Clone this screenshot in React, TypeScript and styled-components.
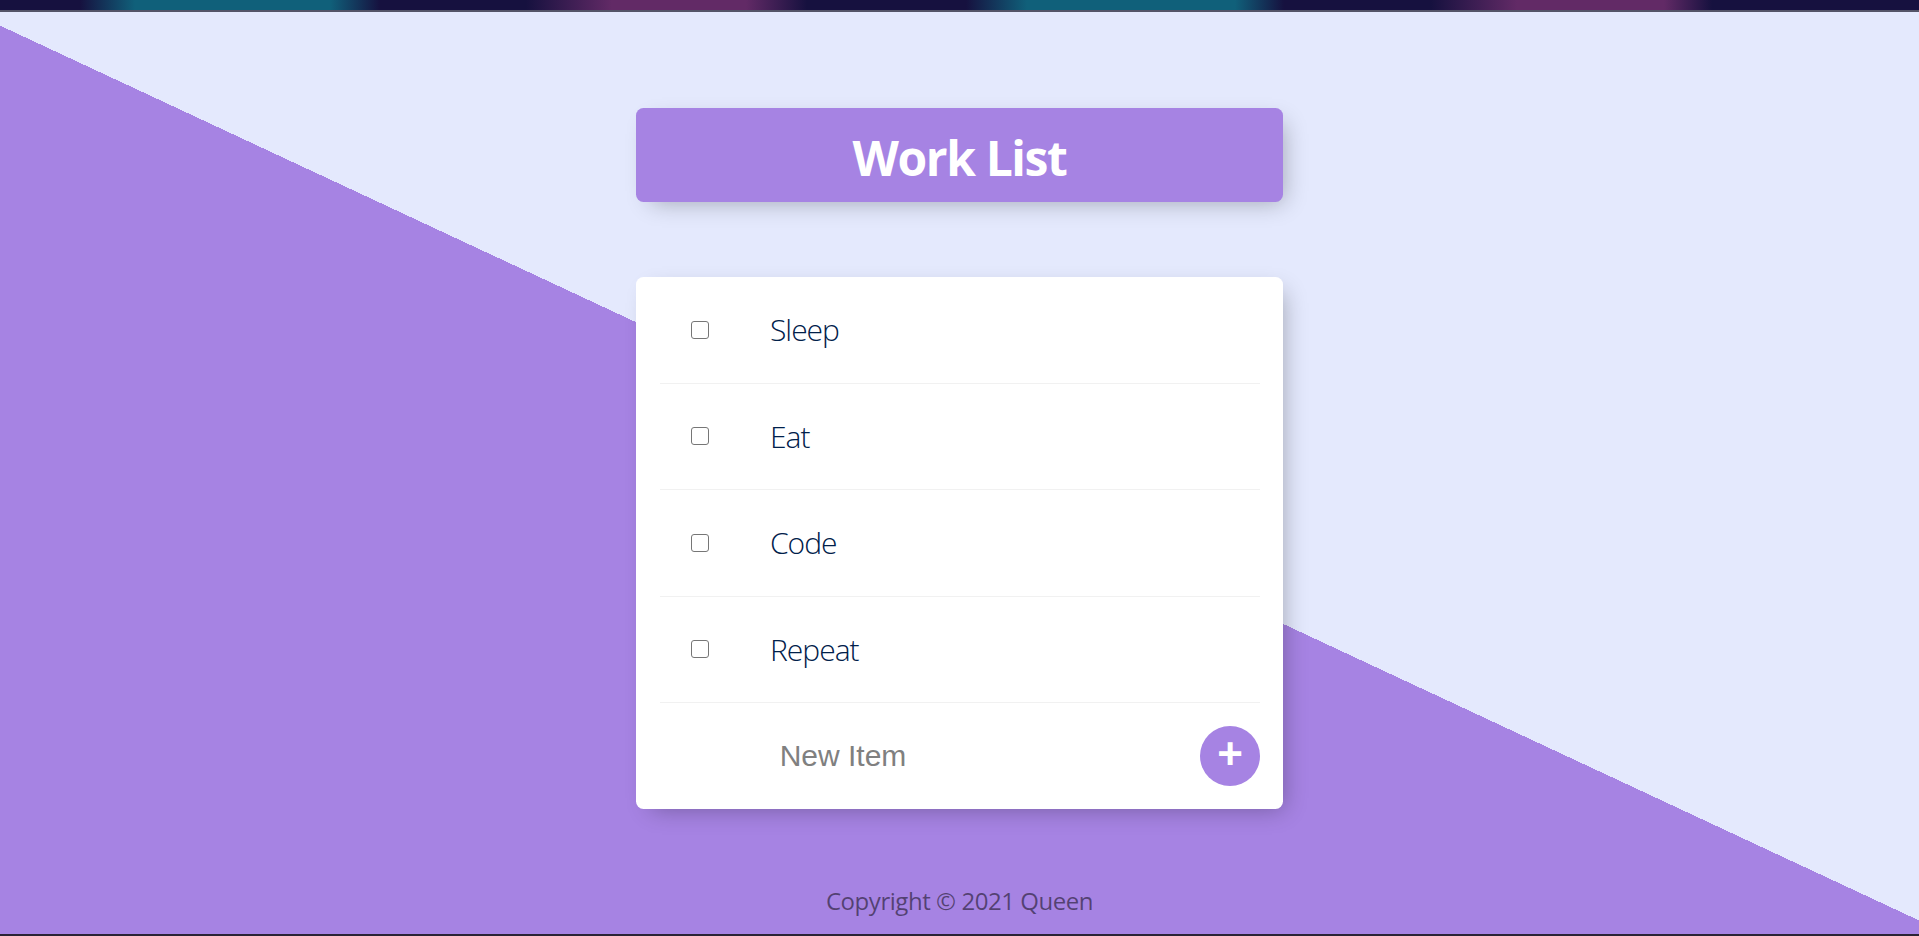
import React from "react";
import styled, { createGlobalStyle } from "styled-components";

const GlobalStyle = createGlobalStyle`
  html, body {
    margin: 0;
    padding: 0;
    height: 100%;
  }
  body {
    font-family: "Open Sans", "Noto Sans", sans-serif;
    overflow: hidden;
  }
  #root {
    height: 100%;
  }
`;

const Window = styled.div`
  display: flex;
  flex-direction: column;
  height: 100vh;
`;

const TopBar = styled.div`
  flex-shrink: 0;
  height: 10px;
  border-bottom: 2px solid #545468;
  background: linear-gradient(
    90deg,
    #16113f 0px,
    #16113f 80px,
    #10607a 135px,
    #10607a 330px,
    #16113f 380px,
    #16113f 526px,
    #622a66 612px,
    #622a66 746px,
    #16113f 807px,
    #16113f 966px,
    #10607a 1027px,
    #10607a 1235px,
    #16113f 1284px,
    #16113f 1431px,
    #622a66 1517px,
    #622a66 1664px,
    #16113f 1712px,
    #16113f 1919px
  );
`;

const Page = styled.main`
  flex: 1;
  display: flex;
  flex-direction: column;
  align-items: center;
  padding-top: 96px;
  background-color: #e4e9fd;
  background-image: linear-gradient(25deg, #a683e3 50%, #e4e9fd 50%);
`;

const BottomEdge = styled.div`
  flex-shrink: 0;
  height: 2px;
  background: #2a2335;
`;

const Box = styled.section`
  width: 647px;
  box-sizing: border-box;
  background: #ffffff;
  border-radius: 7.5px;
  box-shadow: 7.5px 7.5px 22.5px -7.5px rgba(0, 0, 0, 0.3);
  margin-bottom: 75px;
`;

const Heading = styled(Box)`
  height: 94px;
  padding-top: 4px;
  background: #a683e3;
  display: flex;
  align-items: center;
  justify-content: center;
`;

const Title = styled.h1`
  margin: 0;
  color: #ffffff;
  font-family: "Open Sans", "Noto Sans", sans-serif;
  font-size: 48px;
  font-weight: 700;
  letter-spacing: -1.4px;
`;

const ListCard = styled(Box)`
  padding: 0 23px 0 24px;
`;

const Item = styled.div`
  min-height: 105.5px;
  display: flex;
  align-items: center;
  border-bottom: 1px solid #f1f1f1;
`;

const Check = styled.input`
  appearance: none;
  -webkit-appearance: none;
  box-sizing: border-box;
  width: 18px;
  height: 18px;
  margin: 0 31px 0 31px;
  border: 1.5px solid #767676;
  border-radius: 3px;
  background: #ffffff;
  flex-shrink: 0;
`;

const Label = styled.p`
  margin: 0;
  padding: 0 30px;
  font-family: "Open Sans", "Noto Sans", sans-serif;
  font-size: 30px;
  font-weight: 300;
  letter-spacing: -1px;
  color: #00204a;
`;

const NewItemForm = styled.form`
  min-height: 106px;
  display: flex;
  align-items: center;
  padding-left: 30px;
`;

const NewItemInput = styled.input`
  width: 306px;
  height: 90px;
  padding: 0;
  border: none;
  background: transparent;
  outline: none;
  text-align: center;
  font-family: "Liberation Sans", Arial, sans-serif;
  font-size: 30px;
  color: #00204a;
  &::placeholder {
    color: grey;
    opacity: 1;
  }
`;

const AddButton = styled.button`
  margin-left: auto;
  width: 60px;
  height: 60px;
  padding: 0 0 4px;
  border: 0;
  border-radius: 50%;
  background: #a683e3;
  color: #ffffff;
  display: flex;
  align-items: center;
  justify-content: center;
  font-family: "Liberation Sans", Arial, sans-serif;
  font-size: 44px;
  font-weight: 700;
  line-height: 1;
  cursor: pointer;
`;

const Footer = styled.footer`
  color: rgba(0, 0, 0, 0.5);
  font-family: "Open Sans", "Noto Sans", sans-serif;
  font-size: 24px;
  letter-spacing: -0.45px;
  text-align: center;
`;

const items = ["Sleep", "Eat", "Code", "Repeat"];

export default function App() {
  return (
    <>
      <GlobalStyle />
      <Window>
        <TopBar />
        <Page>
          <Heading as="div">
            <Title>Work List</Title>
          </Heading>
          <ListCard>
            {items.map((item) => (
              <Item key={item}>
                <Check type="checkbox" />
                <Label>{item}</Label>
              </Item>
            ))}
            <NewItemForm onSubmit={(e) => e.preventDefault()}>
              <NewItemInput type="text" placeholder="New Item" autoComplete="off" />
              <AddButton type="submit">+</AddButton>
            </NewItemForm>
          </ListCard>
          <Footer>Copyright © 2021 Queen</Footer>
        </Page>
        <BottomEdge />
      </Window>
    </>
  );
}
